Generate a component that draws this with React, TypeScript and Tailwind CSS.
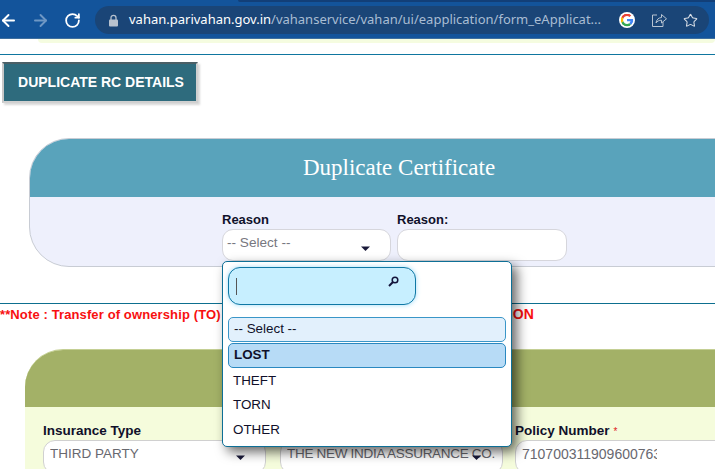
import { ArrowLeft, ArrowRight, RotateCw, Star } from "lucide-react";

function Caret({ className = "" }: { className?: string }) {
  return (
    <svg width="9" height="5" viewBox="0 0 9 5" className={className}>
      <path d="M0 0.5H9L4.5 5Z" fill="#1a1a3a" />
    </svg>
  );
}

function GoogleG() {
  return (
    <svg width="16" height="16" viewBox="0 0 48 48" className="shrink-0 rounded-full bg-white p-[1.5px]">
      <path fill="#EA4335" d="M24 9.500c3.500 0 6.600 1.200 9.100 3.600l6.800-6.800C35.800 2.500 30.400 0 24 0 14.600 0 6.500 5.400 2.600 13.200l7.900 6.200C12.400 13.700 17.700 9.500 24 9.500z" />
      <path fill="#4285F4" d="M47 24.500c0-1.600-.2-3.100-.4-4.500H24v9h13c-.6 3-2.200 5.500-4.800 7.200l7.700 6C44.400 38 47 31.800 47 24.500z" />
      <path fill="#FBBC05" d="M10.500 28.600A14.500 14.500 0 0 1 10.500 19.400l-7.900-6.200a24 24 0 0 0 0 21.600z" />
      <path fill="#34A853" d="M24 48c6.500 0 11.900-2.100 15.900-5.800l-7.700-6c-2.200 1.400-4.900 2.300-8.200 2.300-6.300 0-11.600-4.200-13.500-9.900l-7.900 6.100C6.500 42.600 14.600 48 24 48z" />
    </svg>
  );
}

function Field({ label, value, req, caret, w, tw, size }: { label: string; value: string; req?: boolean; caret?: string; w: string; tw: string; size: string }) {
  return (
    <div className={`flex flex-col ${w}`}>
      <div className="h-[16px] text-[13.5px] leading-[16px] font-bold text-[#10102a]">
        {label}
        {req && <span className="ml-[4px] text-[10px] font-normal text-[#e02020]">*</span>}
      </div>
      <div className={`relative mt-[1px] flex h-[34px] items-start rounded-[12px] border border-[#d0d0d0] bg-white pt-[4px] pl-[6px] leading-[18px] text-[#68686f] ${size}`}>
        <span className={`block overflow-hidden whitespace-nowrap ${tw}`}>{value}</span>
        {caret && <Caret className={`absolute top-[14px] ${caret}`} />}
      </div>
    </div>
  );
}

export default function App() {
  return (
    <div className="relative h-[469px] w-[715px] overflow-hidden bg-white font-['Liberation_Sans',Arial,sans-serif]">
      {/* browser toolbar */}
      <div className="h-[39px] border-b-[1px] border-b-[#3f6f9f] bg-[#13549b]">
        <div className="ml-[238px] h-[2px] rounded-bl-[4px] bg-[#123f78]" />
        <div className="flex h-[36px] items-center">
          <div className="flex w-[95px] items-center">
            <ArrowLeft size={19} strokeWidth={2.400} className="-ml-[1px] text-white" />
            <ArrowRight size={19} strokeWidth={2.400} className="ml-[13px] text-[#6f97c4]" />
            <RotateCw size={17} strokeWidth={2.500} className="ml-[14px] text-white" />
          </div>
          <div className="flex h-[28px] w-[614px] items-center rounded-full bg-[#1a4577] pl-[13px] font-['Noto_Sans',sans-serif] text-[13px]">
            <svg width="11" height="13" viewBox="0 0 11 13" className="shrink-0">
              <path d="M3 6V3.800a2.500 2.500 0 0 1 5 0V6" fill="none" stroke="#b8c2cf" strokeWidth="1.300" />
              <rect x="1" y="5.500" width="9" height="7" rx="1" fill="#b8c2cf" />
            </svg>
            <div className="ml-[10px] w-[490px] shrink-0 whitespace-nowrap">
              <span className="text-white">vahan.parivahan.gov.in</span>
              <span className="text-[#a9bdd3]">/vahanservice/vahan/ui/eapplication/form_eApplicat...</span>
            </div>
            <GoogleG />
            <svg width="16" height="16" viewBox="0 0 16 16" fill="none" stroke="#b8c4d2" strokeWidth="1" className="ml-[16px] shrink-0">
              <path d="M6 3H1.500V14.500H12V10" />
              <path d="M5 11C5.500 7.500 7.500 5.800 10.500 5.500V2.500L15.500 6.800L10.500 11V8.200C8 8.200 6.200 9.200 5 11Z" />
            </svg>
            <Star size={15} strokeWidth={1.700} className="ml-[16px] shrink-0 text-[#d7dde5]" />
          </div>
        </div>
      </div>

      {/* page */}
      <div className="ml-[38px] h-[4px] rounded-b-[6px] bg-[#f5fce0]" />
      <div className="mt-[11px] h-px bg-[#0f76a0]" />
      <div className="mt-[7px] ml-[2px] flex h-[41px] w-[196px] items-center justify-center border-[2px] border-t-[#4a5f66] border-r-[#d0d0d0] border-b-[#d0d0d0] border-l-[#c8c8c8] bg-[#2e6b7d] pl-[2px] text-[14px] font-bold text-white shadow-[2px_2px_2px_#d8d8d8]">
        DUPLICATE RC DETAILS
      </div>

      <div className="mt-[35px] ml-[29px] h-[129px] w-[800px] overflow-visible rounded-[40px] border border-[#c8ccd4] bg-[#eef0fc]">
        <div className="flex h-[58px] items-center rounded-t-[39px] bg-[#59a3bb]">
          <div className="w-[738px] pt-[1px] text-center font-['Liberation_Serif',Georgia,serif] text-[23px] text-white">Duplicate Certificate</div>
        </div>
        <div className="ml-[192px] flex gap-[6px] pt-[15px]">
          <div className="relative w-[169px]">
            <div className="h-[16px] text-[13px] leading-[16px] font-bold text-[#10102a]">Reason</div>
            <div className="relative mt-[1px] flex h-[32px] rounded-[11px] border border-[#d6d6dc] bg-white pt-[4px] pl-[4px] text-[13.600px] leading-[18px] text-[#777780]">
              -- Select --
              <Caret className="absolute top-[16px] right-[20px]" />
            </div>
            {/* dropdown */}
            <div className="absolute top-[49px] left-0 z-10 h-[186px] w-[290px] rounded-[5px] border border-[#0d6f96] bg-white px-[5px] pt-[5px] shadow-[5px_5px_12px_rgba(0,0,0,0.6)]">
              <div className="relative h-[38px] w-[188px] rounded-[12px] border border-[#0f78a5] bg-[#c7efff] shadow-[0_0_5px_#9fdcf8]">
                <div className="absolute top-[10px] left-[7px] h-[17px] w-px bg-[#555]" />
                <svg width="11" height="11" viewBox="0 0 11 11" className="absolute top-[8px] right-[16px]">
                  <circle cx="7" cy="4" r="2.800" fill="none" stroke="#14143a" strokeWidth="1.500" />
                  <path d="M5 6L1 10" stroke="#14143a" strokeWidth="2" />
                </svg>
              </div>
              <ul className="mt-[12px] text-[13.400px] text-[#10102a]">
                <li className="flex h-[25px] items-center rounded-[5px] border border-[#3a96c8] bg-[#e2f0fc] pl-[5px]">-- Select --</li>
                <li className="mt-px flex h-[25px] items-center rounded-[5px] border border-[#2a88c0] bg-[#b7dbf6] pl-[5px] font-bold">LOST</li>
                <li className="mt-[1px] flex h-[24px] items-center pl-[5px]">THEFT</li>
                <li className="flex h-[24px] items-center pl-[5px]">TORN</li>
                <li className="flex h-[25px] items-center pl-[5px] pt-[1px]">OTHER</li>
              </ul>
            </div>
          </div>
          <div className="ml-0 w-[170px]">
            <div className="h-[16px] text-[13px] leading-[16px] font-bold text-[#10102a]">Reason:</div>
            <div className="mt-[1px] h-[32px] rounded-[11px] border border-[#d6d6dc] bg-white" />
          </div>
        </div>
      </div>

      <div className="mt-[36px] h-px bg-[#0d6f8f]" />
      <div className="mt-[2px] h-[16px] whitespace-nowrap text-[13px] leading-[16px] font-bold tracking-[0.12px] text-[#f81010]">
        **Note : Transfer of ownership (TO)
        <span className="ml-[288px] text-[14px]">ION</span>
      </div>

      <div className="mt-[27px] ml-[25px] w-[800px] overflow-hidden rounded-t-[38px] border-t border-[#c4cf94] bg-[#f5fcdc]">
        <div className="h-[57px] bg-[#a3b167]" />
        <div className="flex pt-[16px] pl-[18px]">
          <Field label="Insurance Type" value="THIRD PARTY" caret="right-[20px]" w="w-[223px]" tw="w-[212px]" size="text-[13.500px]" />
          <div className="ml-[14px]">
            <Field label="" value="THE NEW INDIA ASSURANCE CO." caret="right-[21px]" w="w-[223px]" tw="w-[212px]" size="text-[13.500px] tracking-[-0.3px]" />
          </div>
          <div className="ml-[12px]">
            <Field label="Policy Number" req value="71070031190960076300" w="w-[225px]" tw="w-[135px]" size="text-[14px]" />
          </div>
        </div>
      </div>
    </div>
  );
}
